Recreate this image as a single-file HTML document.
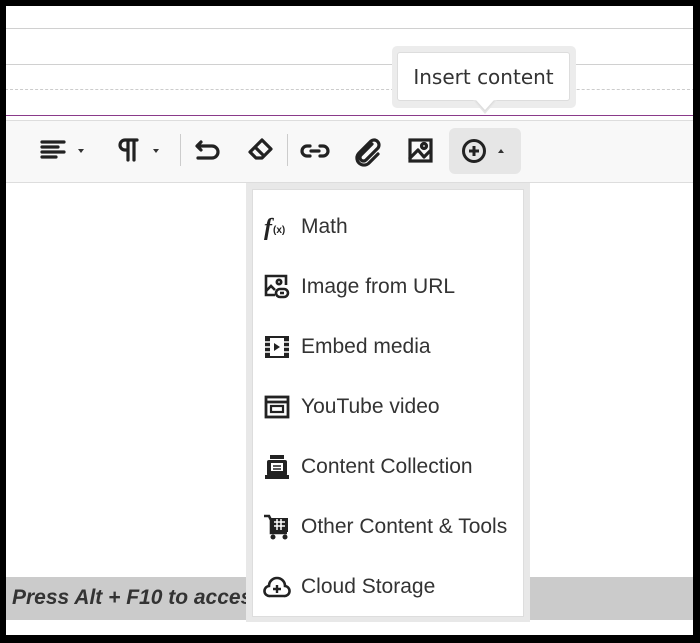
<!DOCTYPE html>
<html><head><style>
body{margin:0;width:700px;height:643px;position:relative;overflow:hidden;background:#fff;font-family:"Liberation Sans",sans-serif}
.a{position:absolute}
.item{position:absolute;left:0;width:272px;height:60px;display:flex;align-items:center}
.item svg{position:absolute;left:10px}
.item span{position:absolute;left:48px;font-size:21px;color:#333}
</style></head><body>
<div class="a" style="left:0;top:28px;width:700px;height:1px;background:#d0d0d0"></div>
<div class="a" style="left:0;top:64px;width:700px;height:1px;background:#d0d0d0"></div>
<div class="a" style="left:0;top:89px;width:700px;border-top:1px dashed #ccc"></div>
<div class="a" style="left:0;top:115px;width:700px;height:1px;background:#8a3a8a"></div>
<div class="a" style="left:0;top:120px;width:700px;height:61px;background:#f8f8f8;border-top:1px solid #ddd;border-bottom:1px solid #ddd"></div>
<svg class="a" style="left:0;top:120px" width="700" height="62">
<g fill="none" stroke="#222" stroke-width="3.2" stroke-linecap="round" stroke-linejoin="round">
<path d="M-2 27l3 5 3-5" fill="#333" stroke="none"/>
<path d="M42 22h22M42 27h16M42 32h22M42 37h14"/>
<path d="M78 29h6l-3 4z" fill="#333" stroke="none"/>
<path d="M128 20v20M134 20v20M137 20h-12a5 5 0 0 0 0 10h3" />
<path d="M153 29h6l-3 4z" fill="#333" stroke="none"/>
<path d="M201 22l-4 4 4 4M198 26h14a6 6 0 0 1 0 12h-14"/>
<path d="M262 20l9 9-9 9h-6l-6-6 12-12zM255 27l9 9"/>
<path d="M310 26h-3a5 5 0 0 0 0 10h3M320 26h3a5 5 0 0 1 0 10h-3M311 31h8"/>
<path d="M372 24l-11 11a3 3 0 0 0 5 5l12-12a5 5 0 0 0-7-7l-12 12a7 7 0 0 0 10 10l9-9"/>
<rect x="410" y="20" width="21" height="21" stroke-linejoin="miter"/>
<path d="M410 38l8-8 6 7 6-6"/><circle cx="424" cy="26" r="2.5"/>
</g>
<rect x="180" y="14" width="1" height="32" fill="#ccc"/>
<rect x="287" y="14" width="1" height="32" fill="#ccc"/>
</svg>
<div class="a" style="left:449px;top:128px;width:72px;height:46px;background:#e6e6e6;border-radius:6px"></div>
<svg class="a" style="left:449px;top:128px" width="72" height="46"><g fill="none" stroke="#222" stroke-width="3"><circle cx="25" cy="23" r="10.5"/><path d="M25 18v10M20 23h10"/></g><path d="M49 25h6l-3-4z" fill="#333"/></svg>
<!-- tooltip -->
<div class="a" style="left:392px;top:46px;width:184px;height:62px;background:#ececec;border-radius:5px"></div>
<div class="a" style="left:397px;top:52px;width:173px;height:49px;background:#fff;border:1px solid #ddd;border-radius:3px;box-sizing:border-box;font-family:'DejaVu Sans',sans-serif;font-size:20px;color:#333;text-align:center;line-height:48px">Insert content</div>
<svg class="a" style="left:470px;top:100px" width="30" height="18"><path d="M3 0l12 14L27 0z" fill="#e6e6e6"/><path d="M6 0l9 10 9-10z" fill="#fff"/><path d="M6 1l9 10 9-10" fill="none" stroke="#ddd"/></svg>
<!-- bottom bar -->
<div class="a" style="left:0;top:577px;width:700px;height:43px;background:#cbcbcb"></div>
<div class="a" style="left:12px;top:586px;font-family:'Liberation Sans',sans-serif;font-size:21px;font-weight:bold;font-style:italic;color:#333">Press Alt + F10 to access</div>
<!-- dropdown -->
<div class="a" style="left:246px;top:183px;width:284px;height:439px;background:#e8e8e8"></div>
<div class="a" style="left:252px;top:189px;width:272px;height:428px;background:#fff;border:1px solid #ddd;box-sizing:border-box">
<div class="item" style="top:7px"><svg width="28" height="28"><text x="1" y="22" font-family="Liberation Serif" font-weight="bold" font-style="italic" font-size="24" fill="#222">f</text><text x="10" y="20" font-size="10" font-weight="bold" fill="#222" font-family="Liberation Sans">(x)</text></svg><span>Math</span></div>
<div class="item" style="top:67px"><svg width="28" height="28" fill="none" stroke="#222" stroke-width="2.6"><path d="M12 22H3V3h20v9"/><circle cx="16" cy="9" r="2.2"/><path d="M3 18l5-5 4 4"/><rect x="13" y="16" width="12" height="8" rx="4"/><path d="M17 20h4"/></svg><span>Image from URL</span></div>
<div class="item" style="top:127px"><svg width="28" height="28"><rect x="2" y="3" width="24" height="22" fill="#222"/><rect x="7" y="5" width="14" height="18" fill="#fff"/><path d="M11 10v8l6-4z" fill="#222"/><path d="M2 9h5M2 14h5M2 19h5M21 9h5M21 14h5M21 19h5" stroke="#fff" stroke-width="1.5"/></svg><span>Embed media</span></div>
<div class="item" style="top:187px"><svg width="28" height="28" fill="none" stroke="#222" stroke-width="2.8"><rect x="3" y="4" width="22" height="20"/><path d="M3 9h22"/><rect x="8" y="13" width="12" height="6" stroke-width="2.2"/></svg><span>YouTube video</span></div>
<div class="item" style="top:247px"><svg width="28" height="28"><rect x="7" y="2" width="14" height="4" fill="#222"/><rect x="4" y="7" width="20" height="16" rx="2" fill="#222"/><rect x="8" y="10" width="12" height="8" fill="#fff"/><path d="M10 13h8M10 16h8" stroke="#222" stroke-width="1.5"/><rect x="2" y="22" width="24" height="4" fill="#222"/></svg><span>Content Collection</span></div>
<div class="item" style="top:307px"><svg width="28" height="28"><path d="M1 3h5l2 4v13h16" fill="none" stroke="#222" stroke-width="2.6"/><rect x="8" y="5" width="17" height="14" fill="#222"/><path d="M11 9h11M11 13h11M14 6v11M18 6v11" stroke="#fff" stroke-width="1.5"/><circle cx="10" cy="24" r="2.5" fill="#222"/><circle cx="22" cy="24" r="2.5" fill="#222"/></svg><span>Other Content &amp; Tools</span></div>
<div class="item" style="top:367px"><svg width="28" height="28" fill="none" stroke="#222" stroke-width="2.6"><path d="M7 23a5 5 0 0 1-1-10 8 8 0 0 1 16 0 5 5 0 0 1-1 10z"/><path d="M14 12v8M10 16h8" stroke-width="2.4"/></svg><span>Cloud Storage</span></div>
</div>
<!-- frame -->
<div class="a" style="left:0;top:0;width:700px;height:643px;box-sizing:border-box;border-style:solid;border-color:#000;border-width:6px 7px 8px 6px"></div>
</body></html>
